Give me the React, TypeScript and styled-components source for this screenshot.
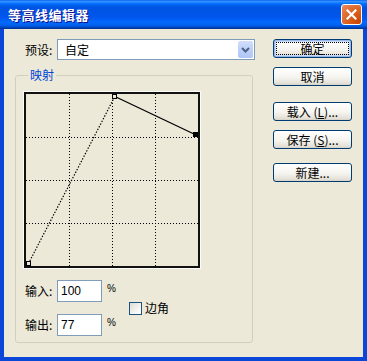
import React from 'react'
import styled, { createGlobalStyle } from 'styled-components'

const GlobalStyle = createGlobalStyle`
  html, body {
    margin: 0;
    padding: 0;
    background: #ffffff;
  }
  body {
    font-family: "Noto Sans CJK SC", "Liberation Sans", sans-serif;
    font-size: 12px;
    color: #000;
  }
`

const grid = [43, 86, 129]

const Graph = () => (
  <GraphBox>
    <svg width="172" height="172" viewBox="0 0 172 172">
      {grid.map((g) => (
        <g key={g} stroke="#000" strokeWidth="1" strokeDasharray="1 2">
          <line x1={g + 0.5} y1="0" x2={g + 0.5} y2="172" />
          <line x1="0" y1={g + 0.5} x2="172" y2={g + 0.5} />
        </g>
      ))}
      <path d="M 2.5 169.5 C 30 116, 62 55, 88.5 3" fill="none" stroke="#000" strokeWidth="1.2" strokeDasharray="1.4 1.6" />
      <line x1="90" y1="3" x2="169" y2="40.5" stroke="#000" strokeWidth="1.3" />
      <rect x="0.5" y="167.5" width="4" height="4" fill="#ECE9D8" stroke="#000" />
      <rect x="86.5" y="0.5" width="4" height="4" fill="#ECE9D8" stroke="#000" />
      <rect x="167" y="38" width="5" height="5" fill="#000" />
    </svg>
  </GraphBox>
)

const App = () => {
  return (
    <>
      <GlobalStyle />
      <Window>
        <TitleBar>
          <Title>等高线编辑器</Title>
          <CloseButton>
            <svg width="11" height="11" viewBox="0 0 11 11">
              <path d="M1.5 1.5 L9.5 9.5 M9.5 1.5 L1.5 9.5" stroke="#fff" strokeWidth="2.2" strokeLinecap="square" />
            </svg>
          </CloseButton>
        </TitleBar>
        <Frame>
          <LeftColumn>
            <PresetRow>
              <Label>预设:</Label>
              <Select>
                <SelectValue>自定</SelectValue>
                <DropButton>
                  <svg width="9" height="6" viewBox="0 0 9 6">
                    <path d="M1 1 L4.5 4.5 L8 1" fill="none" stroke="#4D6185" strokeWidth="2" />
                  </svg>
                </DropButton>
              </Select>
            </PresetRow>
            <GroupBox>
              <Legend>映射</Legend>
              <Graph />
              <InputsArea>
                <FieldRows>
                  <FieldRow>
                    <Label>输入:</Label>
                    <NumberBox>100</NumberBox>
                    <Percent>%</Percent>
                  </FieldRow>
                  <FieldRow>
                    <Label>输出:</Label>
                    <NumberBox>77</NumberBox>
                    <Percent>%</Percent>
                  </FieldRow>
                </FieldRows>
                <CornerOption>
                  <CheckBox />
                  <span>边角</span>
                </CornerOption>
              </InputsArea>
            </GroupBox>
          </LeftColumn>
          <ButtonColumn>
            <Button primary space={0}>确定</Button>
            <Button space={9}>取消</Button>
            <Button space={16}>载入 (<u>L</u>)...</Button>
            <Button space={9}>保存 (<u>S</u>)...</Button>
            <Button space={14}>新建...</Button>
          </ButtonColumn>
        </Frame>
      </Window>
    </>
  )
}

export default App

const Window = styled.div`
  width: 367px;
  height: 361px;
  display: flex;
  flex-direction: column;
`

const TitleBar = styled.div`
  height: 29px;
  flex-shrink: 0;
  display: flex;
  align-items: center;
  justify-content: space-between;
  padding: 0 5px 0 8px;
  background: linear-gradient(
    to bottom,
    #0058ee 0%,
    #3593ff 4%,
    #288eff 7%,
    #127dff 10%,
    #036ffc 13%,
    #0262ee 17%,
    #0057e5 24%,
    #0054e3 30%,
    #0055eb 56%,
    #005bf5 66%,
    #026afe 76%,
    #0062ef 86%,
    #0052d6 92%,
    #0040ab 96%,
    #003092 100%
  );
`

const Title = styled.div`
  color: #ffffff;
  font-weight: 700;
  font-size: 13px;
  letter-spacing: 0.5px;
  text-shadow: 1px 1px #0f1089;
`

const CloseButton = styled.div`
  width: 21px;
  height: 21px;
  box-sizing: border-box;
  border: 1px solid #ffffff;
  border-radius: 3px;
  display: flex;
  align-items: center;
  justify-content: center;
  background: radial-gradient(circle at 90% 90%, #cc4600 0%, #dc6527 55%, #e98e66 100%);
`

const Frame = styled.div`
  flex: 1;
  display: flex;
  gap: 18px;
  padding: 10px 11px 0 11px;
  background: #ece9d8;
  border: 4px solid #0a46d8;
  border-top: none;
`

const LeftColumn = styled.div`
  width: 240px;
  display: flex;
  flex-direction: column;
`

const PresetRow = styled.div`
  height: 21px;
  display: flex;
  align-items: center;
  padding-left: 10px;
`

const Label = styled.span`
  width: 32px;
  flex-shrink: 0;
  line-height: 16px;
`

const Select = styled.div`
  flex: 1;
  height: 21px;
  box-sizing: border-box;
  border: 1px solid #7f9db9;
  background: #ffffff;
  display: flex;
  align-items: center;
  justify-content: space-between;
`

const SelectValue = styled.span`
  padding-left: 7px;
  line-height: 16px;
`

const DropButton = styled.div`
  width: 15px;
  height: 17px;
  margin-right: 1px;
  border-radius: 2px;
  display: flex;
  align-items: center;
  justify-content: center;
  background: linear-gradient(to bottom, #d2defb 0%, #bcd0f9 50%, #b0c6f5 100%);
`

const GroupBox = styled.fieldset`
  width: 238px;
  box-sizing: border-box;
  margin: 7px 0 0 0;
  padding: 9px 8px 6px 8px;
  border: 1px solid #d0d0bf;
  border-radius: 3px;
  min-width: 0;
`

const Legend = styled.legend`
  margin-left: 4px;
  padding: 0 2px;
  line-height: 16px;
  color: #0046d5;
`

const GraphBox = styled.div`
  width: 176px;
  height: 176px;
  box-sizing: border-box;
  border: 2px solid #111111;
  background: #ece9d8;
  box-shadow: 0 0 0 1px #fbfbf7;
  svg {
    display: block;
  }
`

const InputsArea = styled.div`
  margin-top: 12px;
  padding-left: 1px;
  display: flex;
  align-items: center;
`

const FieldRows = styled.div`
  display: flex;
  flex-direction: column;
  gap: 12px;
`

const FieldRow = styled.div`
  height: 22px;
  display: flex;
  align-items: center;
`

const NumberBox = styled.div`
  width: 45px;
  height: 22px;
  box-sizing: border-box;
  border: 1px solid #7f9db9;
  background: #ffffff;
  padding: 3px 0 0 3px;
  font-family: "Liberation Sans", Arial, sans-serif;
  font-size: 12px;
  line-height: 14px;
`

const Percent = styled.span`
  width: 12px;
  margin-left: 5px;
  align-self: flex-start;
  margin-top: 3px;
  font-family: "Liberation Sans", Arial, sans-serif;
  font-size: 10px;
  line-height: 12px;
`

const CornerOption = styled.label`
  margin-left: 10px;
  display: flex;
  align-items: center;
  gap: 3px;
  line-height: 16px;
`

const CheckBox = styled.span`
  width: 13px;
  height: 13px;
  box-sizing: border-box;
  border: 1px solid #1c5180;
  background: linear-gradient(135deg, #dcdcd7 0%, #f7f7f5 70%, #ffffff 100%);
`

const ButtonColumn = styled.div`
  width: 79px;
  display: flex;
  flex-direction: column;
`

const Button = styled.div<{ primary?: boolean; space: number }>`
  height: 19px;
  margin-top: ${({ space }) => space}px;
  box-sizing: border-box;
  border: 1px solid #003c74;
  border-radius: 3px;
  display: flex;
  align-items: center;
  justify-content: center;
  line-height: 16px;
  white-space: nowrap;
  background: linear-gradient(to bottom, #ffffff 0%, #f5f4ef 55%, #e3e0d6 90%, #d6d0c5 100%);
  box-shadow: ${({ primary }) =>
    primary ? 'inset 0 0 0 1px #98b8ea, inset 0 0 0 2px #c9dbf8' : 'none'};
  outline: ${({ primary }) => (primary ? '1px dotted #000' : 'none')};
  outline-offset: -4px;
  u {
    text-decoration: underline;
  }
`
